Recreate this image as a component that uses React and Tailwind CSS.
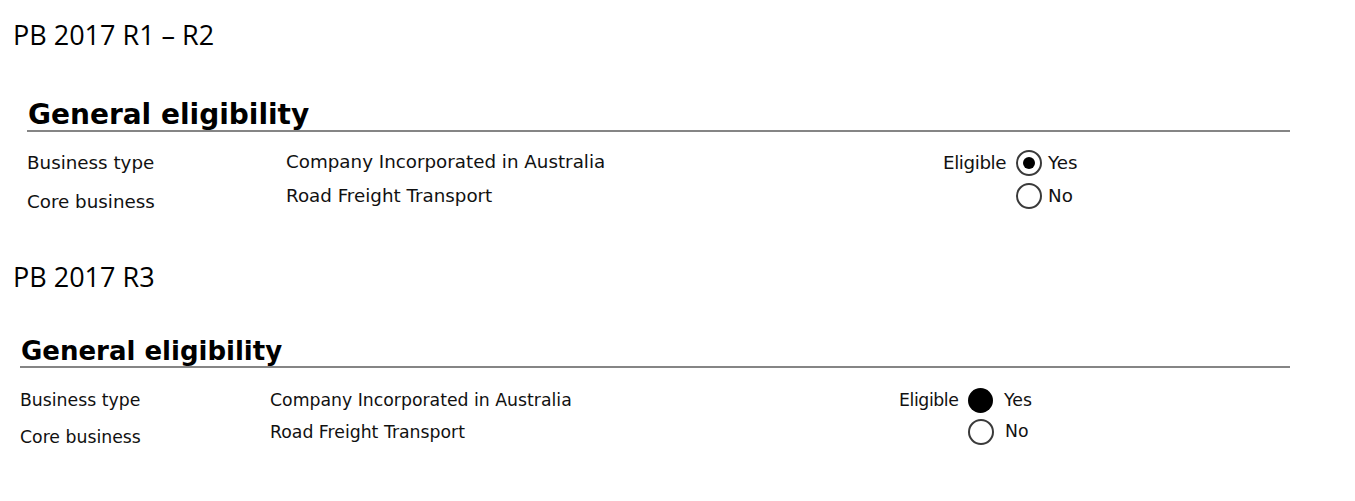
import React from 'react';

function Radio({ checked, solid }) {
  if (solid) {
    return <span className="inline-block w-[25px] h-[25px] rounded-full bg-black shrink-0" />;
  }
  return (
    <span className="inline-flex items-center justify-center w-[26px] h-[26px] rounded-full border-2 border-[#3a3a3a] bg-white shrink-0">
      {checked && <span className="w-[12px] h-[12px] rounded-full bg-black" />}
    </span>
  );
}

export default function App() {
  return (
    <div className="w-[1355px] h-[501px] bg-white overflow-hidden text-black">
      {/* first version */}
      <div className="pl-[13px] pt-[19px] text-[27px] leading-[32px] font-['Open_Sans',sans-serif]">PB 2017 R1 – R2</div>

      <div className="ml-[27px] mr-[65px] mt-[48px] font-['DejaVu_Sans',sans-serif]">
        <div className="border-b-2 border-[#858585] pl-[1px]">
          <h2 className="text-[28px] leading-[31px] font-bold">General eligibility</h2>
        </div>
        <div className="flex mt-[19px] text-[18.3px] text-[#111]">
          <div className="w-[259px] flex flex-col gap-[17px] pt-[1px] leading-[22px]">
            <span>Business type</span>
            <span>Core business</span>
          </div>
          <div className="w-[657px] flex flex-col gap-[12px] leading-[22px]">
            <span>Company Incorporated in Australia</span>
            <span>Road Freight Transport</span>
          </div>
          <div className="flex flex-col gap-[6px] -mt-[2px]">
            <div className="flex items-center">
              <span className="w-[73px] tracking-[-0.4px]">Eligible</span>
              <Radio checked />
              <span className="ml-[6px]">Yes</span>
            </div>
            <div className="flex items-center pl-[73px]">
              <Radio />
              <span className="ml-[6px]">No</span>
            </div>
          </div>
        </div>
      </div>

      {/* second version */}
      <div className="pl-[13px] pt-[48px] text-[27px] leading-[32px] font-['Open_Sans',sans-serif]">PB 2017 R3</div>

      <div className="ml-[20px] mr-[65px] mt-[44px] font-['DejaVu_Sans',sans-serif]">
        <div className="border-b-2 border-[#858585] pl-[1px]">
          <h2 className="text-[26px] leading-[29px] font-bold">General eligibility</h2>
        </div>
        <div className="flex mt-[22px] text-[17.3px] text-[#111]">
          <div className="w-[250px] flex flex-col gap-[17px] leading-[20px]">
            <span>Business type</span>
            <span>Core business</span>
          </div>
          <div className="w-[629px] flex flex-col gap-[12px] leading-[20px]">
            <span>Company Incorporated in Australia</span>
            <span>Road Freight Transport</span>
          </div>
          <div className="flex flex-col gap-[5px] -mt-[2px]">
            <div className="flex items-center">
              <span className="w-[69px] tracking-[-0.4px]">Eligible</span>
              <Radio solid />
              <span className="ml-[11px]">Yes</span>
            </div>
            <div className="flex items-center pl-[69px]">
              <Radio />
              <span className="ml-[11px]">No</span>
            </div>
          </div>
        </div>
      </div>
    </div>
  );
}
